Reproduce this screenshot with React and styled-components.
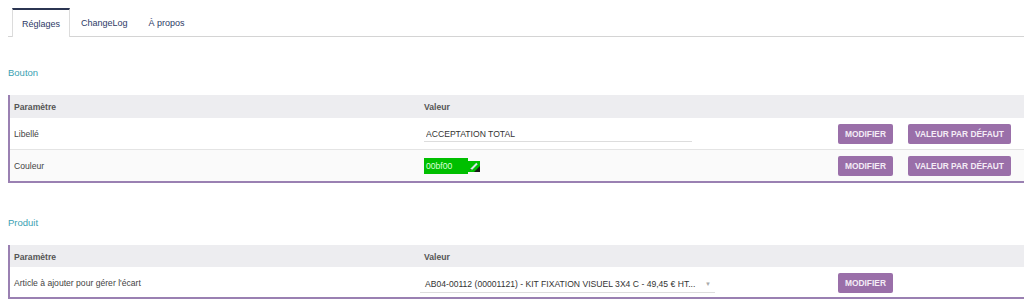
import React from "react";
import styled, { createGlobalStyle } from "styled-components";

const GlobalStyle = createGlobalStyle`
  html, body {
    margin: 0;
    padding: 0;
    background: #fff;
    overflow: hidden;
  }
  body {
    font-family: "Liberation Sans", Arial, sans-serif;
    font-size: 8.6px;
    color: #444;
  }
`;

const Page = styled.div`
  padding: 8px 0 0 8px;
`;

const TabBar = styled.ul`
  display: flex;
  align-items: flex-start;
  margin: 0;
  padding: 0 0 0 4px;
  list-style: none;
  border-bottom: 1px solid #d4d4d4;
  height: 28px;
`;

const Tab = styled.li`
  display: flex;
  align-items: center;
  padding: 0 9px;
  margin-right: 1px;
  color: #2d3a66;
  font-size: 9px;
  box-sizing: border-box;
  height: ${(p) => (p.$active ? 29 : 28)}px;
  border: 1px solid ${(p) => (p.$active ? "#dcdcdc" : "transparent")};
  border-top: 2px solid ${(p) => (p.$active ? "#2b3552" : "transparent")};
  border-bottom: none;
  background: ${(p) => (p.$active ? "#fff" : "transparent")};
`;

const SectionTitle = styled.h3`
  margin: ${(p) => p.$top}px 0 16px;
  font-size: 9.5px;
  line-height: 12px;
  font-weight: normal;
  color: #3aa1b2;
`;

const Table = styled.div`
  border-left: 2px solid #9a80b2;
  border-bottom: 2px solid #9a80b2;
`;

const Row = styled.div`
  display: grid;
  grid-template-columns: 410px 414px 1fr;
  align-items: center;
  height: ${(p) => p.$h}px;
  background: ${(p) => p.$bg || "#fff"};
  border-top: ${(p) => (p.$sep ? "1px solid #e4e4e4" : "none")};
  box-sizing: border-box;
  padding-top: 1px;
`;

const HeadCell = styled.div`
  padding-left: 4px;
  font-weight: bold;
  color: #555;
`;

const Cell = styled.div`
  padding-left: 4px;
  display: flex;
  align-items: center;
  gap: 15px;
  white-space: nowrap;
`;

const TextInput = styled.input`
  width: 268px;
  height: 16px;
  box-sizing: border-box;
  border: none;
  border-bottom: 1px solid #dddddd;
  padding: 0 2px;
  font-family: inherit;
  font-size: 8.6px;
  color: #333;
  outline: none;
  background: transparent;
`;

const ColorBox = styled.div`
  display: flex;
  align-items: center;
`;

const Swatch = styled.div`
  width: 44px;
  height: 16px;
  background: #00bf00;
  color: #dcffdc;
  line-height: 16px;
  padding-left: 2px;
  box-sizing: border-box;
`;

const Select = styled.div`
  width: 295px;
  height: 16px;
  margin-left: -4px;
  margin-top: 4px;
  box-sizing: border-box;
  border-bottom: 1px solid #dddddd;
  padding: 0 4px 0 5px;
  display: flex;
  align-items: center;
  justify-content: space-between;
  color: #333;
`;

const Caret = styled.span`
  color: #aaa;
  font-size: 6px;
`;

const Button = styled.button`
  height: 20px;
  padding: 0 7px;
  border: none;
  border-radius: 2px;
  background: #9a6fa9;
  color: #f4ecf6;
  font-family: inherit;
  font-size: 8.4px;
  font-weight: bold;
  text-transform: uppercase;
  cursor: pointer;
`;

function PencilIcon() {
  return (
    <svg width="12" height="11" viewBox="0 0 12 11">
      <rect x="0" y="0" width="12" height="11" fill="#00bf00" />
      <path d="M6 11 L12 5 L12 11 Z" fill="#1a1a1a" />
      <path d="M3 8.5 L9 2.5" stroke="#d9e2ee" strokeWidth="2" />
      <path d="M2.5 9 L3.5 8" stroke="#333" strokeWidth="1" />
    </svg>
  );
}

export default function App() {
  return (
    <Page>
      <GlobalStyle />
      <TabBar>
        <Tab $active>Réglages</Tab>
        <Tab>ChangeLog</Tab>
        <Tab>À propos</Tab>
      </TabBar>

      <SectionTitle $top={30}>Bouton</SectionTitle>
      <Table>
        <Row $h={23} $bg="#ededf0">
          <HeadCell>Paramètre</HeadCell>
          <HeadCell>Valeur</HeadCell>
          <div />
        </Row>
        <Row $h={31}>
          <Cell>Libellé</Cell>
          <Cell>
            <TextInput defaultValue="ACCEPTATION TOTAL" />
          </Cell>
          <Cell>
            <Button>Modifier</Button>
            <Button>Valeur par défaut</Button>
          </Cell>
        </Row>
        <Row $h={32} $sep $bg="#fafafa">
          <Cell>Couleur</Cell>
          <Cell>
            <ColorBox>
              <Swatch>00bf00</Swatch>
              <PencilIcon />
            </ColorBox>
          </Cell>
          <Cell>
            <Button>Modifier</Button>
            <Button>Valeur par défaut</Button>
          </Cell>
        </Row>
      </Table>

      <SectionTitle $top={34}>Produit</SectionTitle>
      <Table>
        <Row $h={22} $bg="#ededf0">
          <HeadCell>Paramètre</HeadCell>
          <HeadCell>Valeur</HeadCell>
          <div />
        </Row>
        <Row $h={30}>
          <Cell>Article à ajouter pour gérer l'écart</Cell>
          <Cell>
            <Select>
              <span>AB04-00112 (00001121) - KIT FIXATION VISUEL 3X4 C - 49,45 € HT...</span>
              <Caret>▼</Caret>
            </Select>
          </Cell>
          <Cell>
            <Button>Modifier</Button>
          </Cell>
        </Row>
      </Table>
    </Page>
  );
}
